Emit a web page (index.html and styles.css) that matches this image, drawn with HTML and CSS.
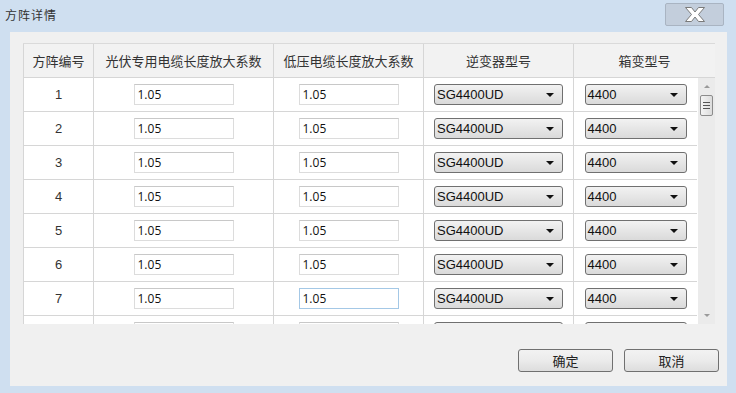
FILE: index.html
```html
<!DOCTYPE html>
<html lang="zh-CN">
<head>
  <meta charset="UTF-8" />
  <title>方阵详情</title>
  <link rel="stylesheet" href="styles.css">
</head>
<body>
  <div class="window">
    <div class="titlebar">
      <span class="title">方阵详情</span>
      <button class="close" aria-label="关闭">
        <svg width="22" height="15" viewBox="0 0 22 15">
          <polygon points="1.5,0.5 7.5,0.5 11,5 14.5,0.5 20.5,0.5 14.5,7.5 20.5,14.5 14.5,14.5 11,10 7.5,14.5 1.5,14.5 7.5,7.5"
                   fill="#fff" stroke="#7a7a7a" stroke-width="1" stroke-linejoin="round" />
        </svg>
      </button>
    </div>

    <div class="panel">
      <div class="grid">
        <div class="head">
          <div class="hcell">方阵编号</div>
          <div class="hcell">光伏专用电缆长度放大系数</div>
          <div class="hcell">低压电缆长度放大系数</div>
          <div class="hcell">逆变器型号</div>
          <div class="hcell">箱变型号</div>
        </div>
        <div class="body">
          <div class="rows" id="rows"></div>
          <div class="scrollbar">
            <div class="arrow up"></div>
            <div class="thumb"><i></i><i></i><i></i></div>
            <div class="track"></div>
            <div class="arrow down"></div>
          </div>
        </div>
      </div>

      <div class="actions">
        <button class="btn">确定</button>
        <button class="btn">取消</button>
      </div>
    </div>
  </div>

  <script>
    // fill rows (row 8 is only peeking out under the fold)
    const rows = document.getElementById("rows");
    for (let i = 1; i <= 8; i++) {
      const row = document.createElement("div");
      row.className = "row";
      const last = i === 8;
      const focus = i === 7 ? " focus" : "";
      const val = last ? "" : "1.05";
      row.innerHTML =
        `<div class="cell num">${last ? "" : i}</div>` +
        `<div class="cell"><input class="num-input" value="${val}"></div>` +
        `<div class="cell"><input class="num-input${focus}" value="${val}"></div>` +
        `<div class="cell"><div class="combo wide"><span>${last ? "" : "SG4400UD"}</span><b></b></div></div>` +
        `<div class="cell"><div class="combo"><span>${last ? "" : "4400"}</span><b></b></div></div>`;
      rows.appendChild(row);
    }
  </script>
</body>
</html>
```

FILE: styles.css
```css
body {
  margin: 0;
  background: #cfdff0;
  font-family: "Noto Sans CJK SC", sans-serif;
  color: #222;
}

.window {
  width: 736px;
  height: 393px;
}

.titlebar {
  height: 32px;
  display: flex;
  align-items: flex-start;
  justify-content: space-between;
}

.title {
  margin: 6px 0 0 5px;
  font-size: 12px;
  letter-spacing: 1px;
  color: #333;
}

.close {
  margin: 3px 12px 0 0;
  width: 59px;
  height: 23px;
  border: 1px solid #a9b4c2;
  border-radius: 2px;
  background: #c3cedc;
  padding: 0;
  display: flex;
  align-items: center;
  justify-content: center;
}

.panel {
  margin: 0 9px 0 10px;
  height: 354px;
  background: #f0f0f0;
  padding: 11px 0 0 13px;
  box-sizing: border-box;
}

.grid {
  width: 692px;
  height: 281px;
  background: #fff;
  overflow: hidden;
}

.head {
  display: grid;
  grid-template-columns: 70px 180px 150px 150px 142px;
  height: 35px;
  background: #f2f2f2;
  border-top: 1px solid #dadada;
  box-sizing: border-box;
}

.hcell {
  display: flex;
  align-items: center;
  justify-content: center;
  font-size: 13px;
  color: #333;
  border-left: 1px solid #d6d6d6;
  border-bottom: 1px solid #d6d6d6;
}

.body {
  display: flex;
  height: 246px;
}

.rows {
  width: 674px;
  overflow: hidden;
}

.row {
  display: grid;
  grid-template-columns: 70px 180px 150px 150px 124px;
  height: 34px;
}

.cell {
  display: flex;
  align-items: center;
  justify-content: center;
  border-left: 1px solid #d6d6d6;
  border-bottom: 1px solid #d6d6d6;
}

.cell.num {
  font-family: "Liberation Sans", sans-serif;
  font-size: 13px;
  color: #333;
}

.num-input {
  width: 100px;
  height: 21px;
  box-sizing: border-box;
  border: 1px solid #dcdcdc;
  border-top-color: #c8c8c8;
  font-family: "Open Sans", sans-serif;
  font-size: 12px;
  padding: 0 3px;
  color: #111;
  outline: none;
}

.num-input.focus {
  border-color: #a4c8e6;
}

.combo {
  width: 102px;
  height: 21px;
  box-sizing: border-box;
  border: 1px solid #707070;
  border-radius: 3px;
  background: linear-gradient(#f2f2f2, #e6e6e6 50%, #dadada);
  display: flex;
  align-items: center;
  justify-content: space-between;
  padding: 0 8px 0 2px;
  font-family: "Liberation Sans", sans-serif;
  font-size: 13px;
  color: #111;
}

.combo.wide {
  width: 129px;
}

.combo b {
  border-left: 4px solid transparent;
  border-right: 4px solid transparent;
  border-top: 4px solid #111;
}

.scrollbar {
  width: 18px;
  background: #ebebeb;
  display: flex;
  flex-direction: column;
  align-items: center;
  border-left: 1px solid #fff;
  box-sizing: border-box;
}

.arrow {
  height: 17px;
  width: 100%;
  display: flex;
  align-items: center;
  justify-content: center;
}

.arrow.up::after {
  content: "";
  border-left: 3px solid transparent;
  border-right: 3px solid transparent;
  border-bottom: 3px solid #9a9a9a;
}

.arrow.down::after {
  content: "";
  border-left: 3px solid transparent;
  border-right: 3px solid transparent;
  border-top: 3px solid #9a9a9a;
}

.thumb {
  width: 13px;
  height: 21px;
  box-sizing: border-box;
  border: 1px solid #8c8c8c;
  border-radius: 2px;
  background: linear-gradient(90deg, #f4f4f4, #dcdcdc);
  display: flex;
  flex-direction: column;
  align-items: center;
  justify-content: center;
  gap: 2px;
}

.thumb i {
  width: 7px;
  height: 1px;
  background: #555;
}

.track {
  flex: 1;
}

.actions {
  display: flex;
  justify-content: flex-end;
  gap: 11px;
  margin: 25px 8px 0 0;
}

.btn {
  width: 95px;
  height: 23px;
  border: 1px solid #707070;
  border-radius: 3px;
  background: linear-gradient(#f2f2f2, #ebebeb 50%, #dddddd);
  font-family: "Noto Sans CJK SC", sans-serif;
  font-size: 13px;
  color: #222;
  padding: 0;
}
```
